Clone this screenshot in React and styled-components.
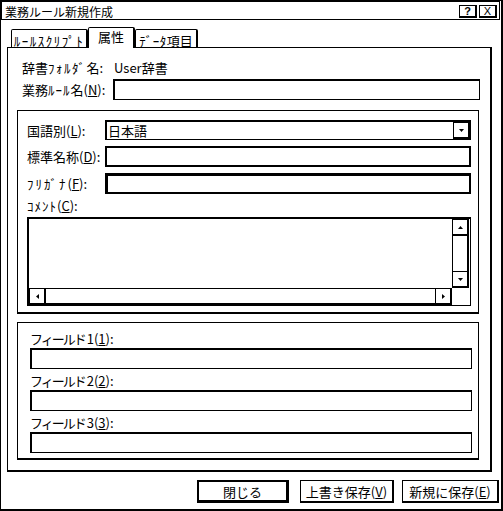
import React from "react";
import styled, { createGlobalStyle, css } from "styled-components";

const GlobalStyle = createGlobalStyle`
  html, body { margin: 0; padding: 0; background: #fff; }
  body {
    font-family: "Noto Sans CJK JP", "Noto Sans", sans-serif;
    font-size: 13px;
    line-height: 15px;
    color: #000;
  }
  * { box-sizing: border-box; }
`;

const Window = styled.div`
  width: 503px;
  height: 511px;
  border: solid #000;
  border-width: 1px 2px 2px 1px;
  background: #fff;
  display: flex;
  flex-direction: column;
`;

const TitleBar = styled.div`
  height: 19px;
  margin-right: 1px;
  border: 1px solid #000;
  padding: 2px 2px 0 3px;
  display: flex;
  justify-content: space-between;
  align-items: flex-start;
`;

const Title = styled.span`
  font-size: 12px;
`;

const CaptionButtons = styled.div`
  display: flex;
  gap: 2px;
  margin-top: 1px;
`;

const CaptionButton = styled.div`
  width: 18px;
  height: 13px;
  border: solid #000;
  border-width: 1px 2px 2px 1px;
  display: flex;
  align-items: center;
  justify-content: center;
  font-family: "Liberation Sans", sans-serif;
  font-size: 11px;
  font-weight: ${(p) => (p.$bold ? 700 : 400)};
  line-height: 10px;
`;

const Body = styled.div`
  flex: 1;
  display: flex;
  flex-direction: column;
  padding: 7px 2px 6px 6px;
`;

const TabStrip = styled.div`
  display: flex;
  align-items: flex-end;
  height: 21px;
  margin: 0 0 -1px 4px;
  position: relative;
  z-index: 1;
`;

const Tab = styled.div`
  width: ${(p) => p.$w}px;
  height: ${(p) => (p.$active ? 21 : 18)}px;
  margin-bottom: ${(p) => (p.$active ? 0 : 1)}px;
  padding-top: ${(p) => (p.$active ? 1 : 3)}px;
  border: solid #000;
  border-width: 1px 2px 0 1px;
  border-radius: 2px 2px 0 0;
  background: #fff;
  text-align: center;
  white-space: nowrap;
`;

/* half-width katakana drawn a little wider, like the bitmap UI font */
const Hw = styled.span`
  letter-spacing: ${(p) => p.$ls ?? 1.5}px;
`;

const Panel = styled.div`
  height: 425px;
  margin-right: 7px;
  border: solid #000;
  border-width: 1px 2px 2px 1px;
  padding: 12px 10px 12px 9px;
  display: flex;
  flex-direction: column;
`;

const InfoRow = styled.div`
  display: flex;
  height: 15px;
  margin-left: 5px;
`;

const FieldRow = styled.div`
  display: flex;
  align-items: center;
  height: ${(p) => p.$h || 21}px;
  margin-top: ${(p) => p.$mt || 0}px;
  margin-left: ${(p) => p.$ml || 0}px;
`;

const Label = styled.span`
  width: ${(p) => p.$w}px;
  flex: none;
  white-space: nowrap;
`;

const Value = styled.span`
  padding-left: 1px;
`;

const TextBox = styled.div`
  flex: ${(p) => (p.$block ? "none" : "1")};
  height: 21px;
  background: #fff;
  border: solid #000;
  ${(p) =>
    p.$frame === "box"
      ? css`border-width: 2px;`
      : p.$frame === "focus"
      ? css`border-width: 3px 2px 2px 3px;`
      : css`border-width: 2px 1px 1px 2px;`}
`;

const GroupBox = styled.div`
  margin: ${(p) => p.$mt}px 1px 0 0;
  border: solid #000;
  border-width: 1px 1px 2px 1px;
  padding: ${(p) => p.$pad};
  display: flex;
  flex-direction: column;
`;

const Select = styled.div`
  flex: 1;
  height: 20px;
  border: solid #000;
  border-width: 2px 1px 1px 2px;
  display: flex;
  align-items: stretch;
`;

const SelectText = styled.span`
  flex: 1;
  padding-left: 1px;
  line-height: 17px;
`;

const ArrowButton = styled.div`
  width: ${(p) => p.$w || 17}px;
  height: ${(p) => p.$h || 17}px;
  flex: none;
  border: solid #000;
  border-width: ${(p) => p.$bw || "1px 2px 2px 1px"};
  display: flex;
  align-items: center;
  justify-content: center;
`;

const Memo = styled.div`
  margin-top: 2px;
  height: 89px;
  border: solid #000;
  border-width: 2px 1px 1px 2px;
  padding-right: 1px;
  display: grid;
  grid-template-columns: 1fr 17px;
  grid-template-rows: 1fr 17px;
`;

const VScroll = styled.div`
  border: solid #000;
  border-width: 0 2px 0 1px;
  display: flex;
  flex-direction: column;
  justify-content: space-between;
`;

const HScroll = styled.div`
  border: solid #000;
  border-width: 1px 0 2px 0;
  display: flex;
  justify-content: space-between;
`;

const FieldLabel = styled.div`
  height: 15px;
  margin-top: ${(p) => p.$mt || 0}px;
  margin-bottom: 2px;
  white-space: nowrap;
`;

const Kana = styled.span`
  letter-spacing: -2px;
  margin-right: 2px;
`;

const ButtonRow = styled.div`
  display: flex;
  justify-content: flex-end;
  margin-top: 8px;
`;

const PushButton = styled.button`
  width: ${(p) => p.$w}px;
  height: 23px;
  margin-left: ${(p) => p.$ml || 0}px;
  padding: 0;
  background: #fff;
  color: #000;
  font: inherit;
  border: solid #000;
  border-width: ${(p) => (p.$default ? "2px 3px 3px 2px" : "1px 2px 2px 1px")};
  border-radius: 0;
  white-space: nowrap;
`;

const Tri = ({ dir }) => {
  const pts = {
    down: "0,0 5,0 2.5,3",
    up: "0,3 5,3 2.5,0",
    left: "3,0 3,5 0,2.5",
    right: "0,0 0,5 3,2.5",
  }[dir];
  const vertical = dir === "up" || dir === "down";
  return (
    <svg width={vertical ? 5 : 3} height={vertical ? 3 : 5} viewBox={vertical ? "0 0 5 3" : "0 0 3 5"}>
      <polygon points={pts} fill="#000" />
    </svg>
  );
};

const Field = ({ children, mt }) => (
  <>
    <FieldLabel $mt={mt}>{children}</FieldLabel>
    <TextBox $block />
  </>
);

export default function App() {
  return (
    <>
      <GlobalStyle />
      <Window>
        <TitleBar>
          <Title>業務ルール新規作成</Title>
          <CaptionButtons>
            <CaptionButton $bold>?</CaptionButton>
            <CaptionButton>X</CaptionButton>
          </CaptionButtons>
        </TitleBar>
        <Body>
          <TabStrip>
            <Tab $w={77}>
              <Hw $ls={1.5}>ﾙｰﾙｽｸﾘﾌﾟﾄ</Hw>
            </Tab>
            <Tab $w={47} $active>
              属性
            </Tab>
            <Tab $w={63}>
              <Hw $ls={0.5}>ﾃﾞｰﾀ</Hw>項目
            </Tab>
          </TabStrip>
          <Panel>
            <InfoRow>
              <Label $w={91}>
                辞書<Hw>ﾌｫﾙﾀﾞ</Hw>名:
              </Label>
              <Value>User辞書</Value>
            </InfoRow>
            <FieldRow $mt={4} $ml={5}>
              <Label $w={91}>
                業務<Hw $ls={1}>ﾙｰﾙ</Hw>名(<u>N</u>):
              </Label>
              <TextBox />
            </FieldRow>
            <GroupBox $mt={10} $pad="9px 7px 6px 9px">
              <FieldRow $h={20}>
                <Label $w={78}>
                  国語別(<u>L</u>):
                </Label>
                <Select>
                  <SelectText>日本語</SelectText>
                  <ArrowButton $h={17}>
                    <Tri dir="down" />
                  </ArrowButton>
                </Select>
              </FieldRow>
              <FieldRow $mt={6}>
                <Label $w={78}>
                  標準名称(<u>D</u>):
                </Label>
                <TextBox $frame="box" />
              </FieldRow>
              <FieldRow $mt={6}>
                <Label $w={78}>
                  <Hw $ls={2}>ﾌﾘｶﾞﾅ</Hw>(<u>F</u>):
                </Label>
                <TextBox $frame="focus" />
              </FieldRow>
              <FieldLabel $mt={4}>
                <Hw $ls={1}>ｺﾒﾝﾄ</Hw>(<u>C</u>):
              </FieldLabel>
              <Memo>
                <div />
                <VScroll>
                  <ArrowButton $w={14} $bw="1px 0 2px 0">
                    <Tri dir="up" />
                  </ArrowButton>
                  <ArrowButton $w={14} $bw="1px 0 2px 0">
                    <Tri dir="down" />
                  </ArrowButton>
                </VScroll>
                <HScroll>
                  <ArrowButton $h={14} $bw="0 2px 0 1px">
                    <Tri dir="left" />
                  </ArrowButton>
                  <ArrowButton $h={14} $bw="0 2px 0 1px">
                    <Tri dir="right" />
                  </ArrowButton>
                </HScroll>
                <div />
              </Memo>
            </GroupBox>
            <GroupBox $mt={8} $pad="8px 6px 5px 12px">
              <Field>
                <Kana>フィールド</Kana>1(<u>1</u>):
              </Field>
              <Field mt={4}>
                <Kana>フィールド</Kana>2(<u>2</u>):
              </Field>
              <Field mt={4}>
                <Kana>フィールド</Kana>3(<u>3</u>):
              </Field>
            </GroupBox>
          </Panel>
          <ButtonRow>
            <PushButton $w={92} $default>
              閉じる
            </PushButton>
            <PushButton $w={94} $ml={11}>
              上書き保存(<u>V</u>)
            </PushButton>
            <PushButton $w={97} $ml={8}>
              新規に保存(<u>E</u>)
            </PushButton>
          </ButtonRow>
        </Body>
      </Window>
    </>
  );
}
